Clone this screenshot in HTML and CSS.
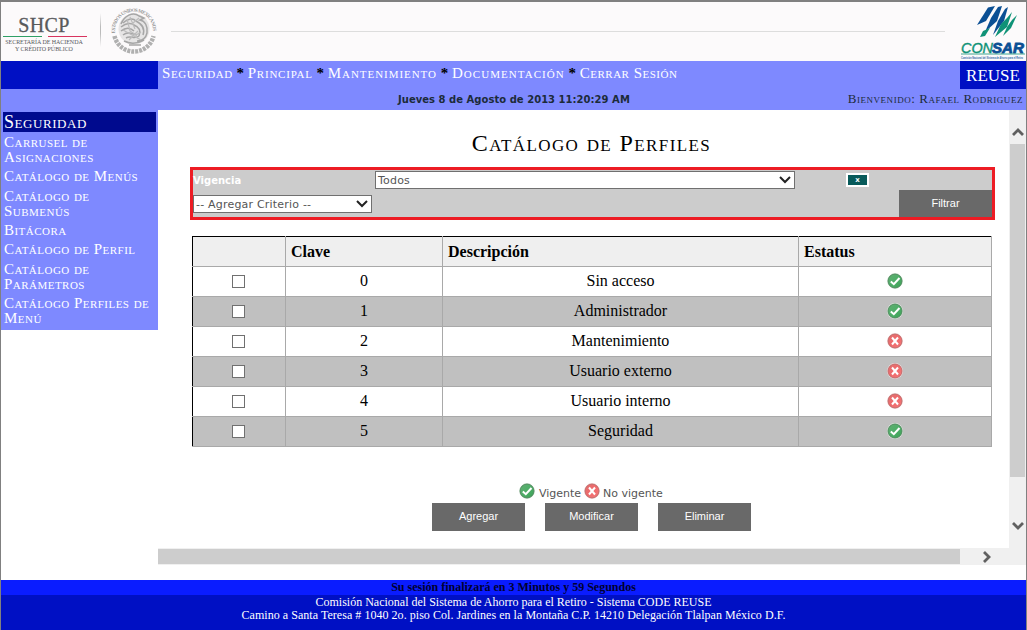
FILE: index.html
```html
<!DOCTYPE html>
<html lang="es">
<head>
<meta charset="utf-8">
<title>Catálogo de Perfiles</title>
<link rel="stylesheet" href="styles.css">
</head>
<body>
<svg class="defs" width="0" height="0">
  <defs>
    <linearGradient id="g" x1="0" y1="0" x2="1" y2="1"><stop offset="0" stop-color="#5fae70"/><stop offset=".5" stop-color="#4fae68"/><stop offset="1" stop-color="#3aa055"/></linearGradient>
    <linearGradient id="r" x1="0" y1="0" x2="1" y2="1"><stop offset="0" stop-color="#e07070"/><stop offset=".5" stop-color="#ef6a6c"/><stop offset="1" stop-color="#f47878"/></linearGradient>
    <symbol id="ok" viewBox="0 0 16 16"><circle cx="8" cy="8" r="7.9" fill="#e6efe6"/><circle cx="8" cy="8" r="7" fill="url(#g)" stroke="#4f8a5e"/><path d="M3.800 8.600l3 2.600 5.700-6.200" fill="none" stroke="#fff" stroke-width="2"/></symbol>
    <symbol id="no" viewBox="0 0 16 16"><circle cx="8" cy="8" r="7.9" fill="#f3e4e4"/><circle cx="8" cy="8" r="7" fill="url(#r)" stroke="#c26a6a"/><path d="M5 4.500l6 7M11 4.500l-6 7" fill="none" stroke="#fff" stroke-width="2"/></symbol>
  </defs>
</svg>
<div class="window">
  <header class="brand">
    <div class="shcp">
      <div class="shcp-name"><span>SHCP</span></div>
      <div class="shcp-rule"><i class="green"></i><i class="red"></i></div>
      <div class="shcp-sub"><span>SECRETARÍA DE HACIENDA</span></div>
      <div class="shcp-sub second"><span>Y CRÉDITO PÚBLICO</span></div>
    </div>
    <div class="divider"></div>
    <svg class="seal" viewBox="0 0 46 46">
      <defs><path id="arc" d="M4.500 28A19 19 0 1 1 41.500 28"/></defs>
      <text class="seal-text"><textPath href="#arc" startOffset="2" textLength="62">ESTADOS UNIDOS MEXICANOS</textPath></text>
      <circle cx="23" cy="22" r="15.500" fill="#e6e5e5"/>
      <path d="M3.500 29a20 20 0 0 0 39 0" fill="none" stroke="#b0b0b0" stroke-width="4.500" stroke-dasharray="3 1"/>
      <path d="M10 17c3-8 12-13 18-8l5 2-4 2c5 1 8 6 7 13-1 5-5 8-10 8M12 16c5-4 10-5 13-2M10 20c5-4 11-5 14-1M10 24c5-4 10-3 13 0M12 28c5-4 9-1 14 0M25 14c6 3 9 8 7 14M23 18c5 2 7 6 5 11M15 31c5-3 8 2 13-2M13 34c6 3 13 3 20-1M18 38h12" fill="none" stroke="#a6a6a6" stroke-width="1.500"/>
      <path d="M16 12l3 12 6 4 5-3M19 10l5 12M28 11l-6 5M12 23l18 10M18 33l9-9" fill="none" stroke="#bcbcbc" stroke-width="1.200"/>
    </svg>
    <div class="line"></div>
    <svg class="consar" viewBox="0 0 66 58">
      <g fill="#0b4f94"><path d="M28 5.500L35 4 26 19 17 23z"/><path d="M38 5l4-1-5 15-12 11 6-14z"/><path d="M45 7l3-2-4 14-11 14 5-14z"/></g>
      <g fill="#0f9277"><path d="M47 16l5-6-5 15-12 10 6-13z"/><path d="M52 18l5-5-6 13-8 8 4-9z"/><path d="M23 29l7-3-5 8-5 1z"/></g>
      <text class="con" x="1" y="50.500" textLength="32" lengthAdjust="spacingAndGlyphs">CON</text>
      <text class="sar" x="32" y="50.500" textLength="32" lengthAdjust="spacingAndGlyphs">SAR</text>
      <path d="M1 52h64" stroke="#0f9277" stroke-width=".8"/>
      <text class="tag" x="1" y="56.500" textLength="62" lengthAdjust="spacingAndGlyphs">Comisión Nacional del Sistema de Ahorro para el Retiro</text>
    </svg>
  </header>

  <div class="topbar">
    <div class="corner"></div>
    <div class="center">
      <nav class="menu"><a class="m1">Seguridad</a><b>*</b><a class="m2">Principal</a><b>*</b><a class="m3">Mantenimiento</a><b>*</b><a class="m4">Documentación</a><b>*</b><a class="m5">Cerrar Sesión</a></nav>
      <div class="date">Jueves 8 de Agosto de 2013 11:20:29 AM</div>
    </div>
    <div class="right">
      <div class="reuse">REUSE</div>
      <div class="welcome">Bienvenido: Rafael Rodriguez</div>
    </div>
  </div>

  <div class="body">
    <aside class="side">
      <h2>Seguridad</h2>
      <a>Carrusel de<br>Asignaciones</a>
      <a>Catálogo de Menús</a>
      <a>Catálogo de<br>Submenús</a>
      <a>Bitácora</a>
      <a>Catálogo de Perfil</a>
      <a>Catálogo de<br>Parámetros</a>
      <a>Catálogo Perfiles de<br>Menú</a>
    </aside>
    <div class="frame">
      <main class="content">
        <h1>Catálogo de Perfiles</h1>
        <section class="filter">
          <div class="frow">
            <span class="flabel">Vigencia</span>
            <div class="select wide">Todos<svg viewBox="0 0 12 8"><path d="M1 1l5 5 5-5"/></svg></div>
            <button class="clear">x</button>
          </div>
          <div class="frow second">
            <div class="select crit">-- Agregar Criterio --<svg viewBox="0 0 12 8"><path d="M1 1l5 5 5-5"/></svg></div>
            <button class="btn">Filtrar</button>
          </div>
        </section>
        <table class="grid">
          <colgroup><col class="c1"><col class="c2"><col class="c3"><col class="c4"></colgroup>
          <tr><th></th><th>Clave</th><th>Descripción</th><th>Estatus</th></tr>
          <tr><td><i class="check"></i></td><td>0</td><td>Sin acceso</td><td><svg class="st"><use href="#ok"/></svg></td></tr>
          <tr><td><i class="check"></i></td><td>1</td><td>Administrador</td><td><svg class="st"><use href="#ok"/></svg></td></tr>
          <tr><td><i class="check"></i></td><td>2</td><td>Mantenimiento</td><td><svg class="st"><use href="#no"/></svg></td></tr>
          <tr><td><i class="check"></i></td><td>3</td><td>Usuario externo</td><td><svg class="st"><use href="#no"/></svg></td></tr>
          <tr><td><i class="check"></i></td><td>4</td><td>Usuario interno</td><td><svg class="st"><use href="#no"/></svg></td></tr>
          <tr><td><i class="check"></i></td><td>5</td><td>Seguridad</td><td><svg class="st"><use href="#ok"/></svg></td></tr>
        </table>
        <div class="legend"><svg class="st"><use href="#ok"/></svg><span class="l1">Vigente</span><svg class="st"><use href="#no"/></svg><span class="l2">No vigente</span></div>
        <div class="actions"><button class="btn">Agregar</button><button class="btn">Modificar</button><button class="btn">Eliminar</button></div>
      </main>
      <div class="vscroll">
        <svg viewBox="0 0 12 9"><path d="M1 8l5-5 5 5"/></svg>
        <div class="vthumb"></div>
        <svg viewBox="0 0 12 9"><path d="M1 1l5 5 5-5"/></svg>
      </div>
      <div class="hscroll">
        <div class="hthumb"></div>
        <svg viewBox="0 0 9 12"><path d="M1 1l5 5-5 5"/></svg>
      </div>
    </div>
  </div>

  <footer>
    <div class="session"><span>Su sesión finalizará en 3 Minutos y 59 Segundos</span></div>
    <div class="info">
      <div class="f1">Comisión Nacional del Sistema de Ahorro para el Retiro - Sistema CODE REUSE</div>
      <div class="f2">Camino a Santa Teresa # 1040 2o. piso Col. Jardines en la Montaña C.P. 14210 Delegación Tlalpan México D.F.</div>
    </div>
  </footer>
</div>
</body>
</html>
```
FILE: styles.css
```css
* { box-sizing: border-box; }
body { margin: 0; width: 1027px; height: 630px; overflow: hidden; background: #fff; font-family: "Liberation Serif", serif; }
.defs { position: absolute; }
h1, h2 { margin: 0; font-weight: normal; }
.window { height: 630px; border: solid #808080; border-width: 2px 1px 0 1px; display: flex; flex-direction: column; }
.brand { height: 59px; background: #fcfafb; display: flex; flex: none; }
.shcp { width: 99px; padding-top: 13px; white-space: nowrap; color: #58595b; }
.shcp > div { display: flex; justify-content: center; width: 86px; }
.shcp-name { font-size: 20px; line-height: 21px; height: 20px; letter-spacing: .4px; -webkit-text-stroke: .3px #58595b; }
.shcp > .shcp-rule { gap: 6px; height: 3px; width: 84px; margin-left: 2px; padding-top: 1px; }
.shcp-rule i { width: 39px; height: 1px; background: #2fa066; }
.shcp-rule .red { background: #d8345f; }
.shcp-sub { font-size: 6px; line-height: 7px; height: 7px; margin-top: 1px; letter-spacing: -.05px; }
.shcp-sub.second { margin-top: 0; }
.divider { width: 1px; height: 34px; margin-top: 11px; background: linear-gradient(#fcfafb, #bbb 40%, #bbb 60%, #fcfafb); }
.seal { width: 46px; height: 46px; margin: 5px 0 0 10px; overflow: visible; }
.seal-text { font: bold 5px "Liberation Serif", serif; fill: #999; }
.line { width: 775px; height: 1px; margin: 29px 0 0 14px; background: #ddd; }
.consar { width: 66px; height: 58px; margin-left: 15px; overflow: visible; }
.con, .sar { font: italic 15px "Liberation Sans", sans-serif; fill: #0f9277; stroke: #0f9277; stroke-width: .4px; }
.sar { font-weight: bold; fill: #0b4f94; stroke: #0b4f94; stroke-width: .8px; }
.tag { font: bold 4px "Liberation Sans", sans-serif; fill: #2a67a4; }

.topbar { height: 49px; flex: none; background: #7e89ff; display: flex; }
.corner { width: 157px; height: 28px; background: #0010c4; }
.center { width: 642px; }
.menu { height: 28px; padding: 4px 0 0 4px; display: flex; line-height: 16px; font-size: 15px; font-variant: small-caps; color: #fff; white-space: nowrap; }
.m1 { letter-spacing: .55px; }
.m2 { letter-spacing: .77px; }
.m3 { letter-spacing: .95px; }
.m4 { letter-spacing: 1.050px; }
.m5 { letter-spacing: .5px; }
.menu b { width: 15px; text-align: center; color: #000; }
.date { margin-top: 4px; padding-left: 240px; font: bold 10px/14px "DejaVu Sans", sans-serif; letter-spacing: .03px; color: #1c2b3a; white-space: nowrap; }
.right { flex: 1; display: flex; flex-direction: column; align-items: flex-end; }
.reuse { width: 66px; height: 28px; background: #0010c4; color: #fff; font-size: 17px; line-height: 29px; text-align: center; }
.welcome { padding-right: 3px; font-size: 13px; line-height: 20px; font-variant: small-caps; letter-spacing: .55px; color: #1c2b3a; white-space: nowrap; }

.body { height: 470px; flex: none; display: flex; align-items: flex-start; }
.side { width: 157px; height: 220px; padding: 2px 2px 0; background: #7e89ff; color: #fff; font-variant: small-caps; }
.side h2 { height: 20px; background: #000a8e; font-size: 18px; line-height: 20px; padding-left: 1px; letter-spacing: .55px; margin-bottom: 3px; }
.side a { display: block; padding-left: 1px; font-size: 15px; line-height: 15.100px; margin-bottom: 4.200px; white-space: nowrap; letter-spacing: .47px; }
.frame { width: 868px; display: grid; grid-template-columns: 851px 17px; grid-template-rows: 438px 17px; }
.content { padding: 20px 0 0 32px; }
h1 { width: 803px; text-align: center; font-size: 24px; line-height: 26px; height: 37px; font-variant: small-caps; letter-spacing: 1.400px; white-space: nowrap; }
.filter { width: 805px; height: 53px; border: 3px solid #ed1c24; background: #ccc; font: 11px "DejaVu Sans", sans-serif; color: #555; }
.frow { display: flex; height: 20px; }
.frow.second { height: 27px; justify-content: space-between; }
.flabel { width: 182px; font-weight: bold; font-size: 10px; line-height: 22px; color: #fff; }
.select { height: 18px; border: 1px solid #707070; background: #fff; display: flex; align-items: center; justify-content: space-between; padding: 0 3px 0 2px; white-space: nowrap; letter-spacing: .2px; }
.select svg { width: 12px; height: 8px; fill: none; stroke: #222; stroke-width: 2; }
.wide { width: 420px; margin-top: 1px; }
.crit { width: 179px; margin-top: 5px; }
.clear { width: 23px; height: 14px; margin: 3px 0 0 51px; padding: 0; border: 2px solid #fff; background: #075a5a; color: #fff; font: bold 7px/8px "DejaVu Sans", sans-serif; }
.btn { width: 93px; height: 28px; border: 0; padding: 0 0 2px; background: #696969; color: #fff; font: 11px "Liberation Sans", sans-serif; }
.second .btn { height: 27px; }
.grid { width: 800px; margin: 16px 0 0 2px; border-collapse: collapse; table-layout: fixed; font-size: 16px; }
.c1 { width: 93px; } .c2 { width: 157px; } .c3 { width: 356px; }
.grid th, .grid td { height: 30px; padding: 0; border: 1px solid #a9a9a9; text-align: center; line-height: 20px; }
.grid td { padding-bottom: 1px; }
.grid th { background: #efefef; text-align: left; padding-left: 5px; border-top-color: #000; }
.grid tr > :first-child { border-left-color: #000; }
.grid td:first-child, .grid td:last-child { padding-right: 1px; }
.grid tr:nth-child(odd) td { background: #c0c0c0; }
.check { display: block; width: 13px; height: 13px; margin: 0 auto; border: 1px solid #707070; background: #fff; }
.st { width: 16px; height: 16px; display: block; margin: 0 auto; }
.legend { display: flex; height: 20px; margin: 36px 0 0 329px; font: 11px/22px "DejaVu Sans", sans-serif; color: #555; white-space: nowrap; }
.legend .st { margin: 0; flex: none; }
.l1 { width: 49px; padding-left: 4px; } .l2 { padding-left: 3px; }
.actions { display: flex; gap: 20px; padding-left: 242px; }
.vscroll { grid-row: 1; grid-column: 2; background: #f0f0f0; display: flex; flex-direction: column; align-items: center; padding-top: 17px; }
.vscroll svg { width: 12px; height: 9px; fill: none; stroke: #606060; stroke-width: 2.800; }
.vthumb { width: 15px; height: 333px; margin: 8px 0 45px; background: #cdcdcd; }
.hscroll { grid-column: 1 / 3; background: #f0f0f0; display: flex; align-items: center; gap: 23px; }
.hthumb { width: 802px; height: 15px; background: #cdcdcd; }
.hscroll svg { width: 9px; height: 12px; fill: none; stroke: #606060; stroke-width: 2.800; }

footer { flex: 1; text-align: center; background: #0010c4; color: #fff; font-size: 12px; white-space: nowrap; }
.session { height: 15px; line-height: 15px; background: #0a1cff; color: #000030; font-weight: bold; }
.info { line-height: 13px; padding-top: 1px; }
.f2 { letter-spacing: .04px; }
```
